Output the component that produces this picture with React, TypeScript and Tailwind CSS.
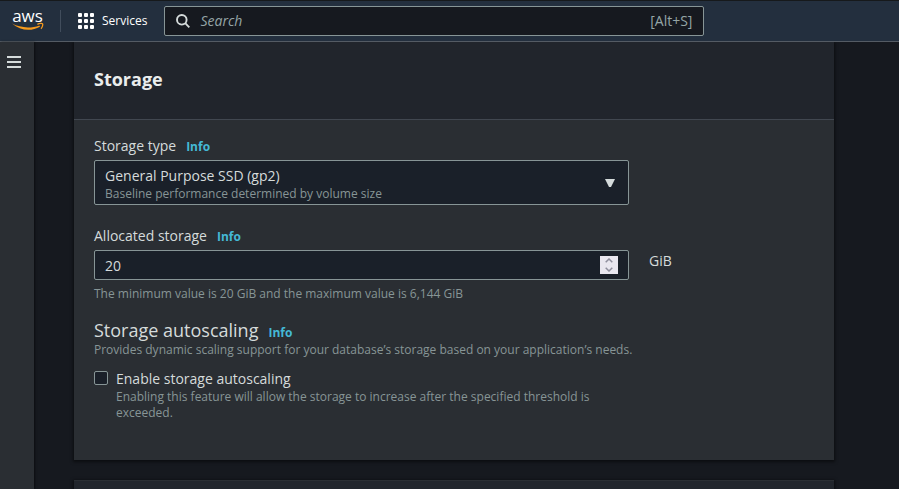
import { useState } from 'react';

function AwsLogo() {
  return (
    <svg viewBox="0 -6 32 34" className="block h-[34px] w-8" role="img" aria-label="AWS">
      <text x="15.5" y="12" textAnchor="middle" fill="#ffffff" className="font-['Open_Sans',sans-serif] text-[17px] font-medium">
        aws
      </text>
      <path d="M0 13.6C8 18 19 18.6 27.4 15.4L28 16.7C19.5 21.6 8.5 21 0 13.6Z" fill="#f79a1c" />
      <path d="M25.4 14.3C27.4 13.3 30.2 13.2 30.6 13.9C31.1 14.7 30.3 17.4 29 18.7" fill="none" stroke="#f79a1c" strokeWidth="1.3" />
    </svg>
  );
}

function ServicesIcon() {
  const offsets = [0, 6, 12];
  return (
    <svg viewBox="0 0 16 16" className="size-4" aria-hidden="true" fill="#ffffff">
      {offsets.map((y) => offsets.map((x) => <rect key={`${x}-${y}`} x={x} y={y} width="4" height="4" rx="1" />))}
    </svg>
  );
}

function InfoLink() {
  return (
    <a href="#info" className="ml-2.5 text-[12px] font-bold text-[#44b9d6]">
      Info
    </a>
  );
}

function TopBar() {
  return (
    <header className="flex h-[42px] items-center border-t border-b border-t-[#16191b] border-b-[#545b64] bg-[#232f3e] pl-3">
      <a href="#home" className="shrink-0">
        <AwsLogo />
      </a>
      <div className="ml-4 h-[22px] w-px bg-[#414d5c]" />
      <button type="button" className="ml-[17px] flex items-center gap-2 text-[12px] text-white">
        <ServicesIcon />
        Services
      </button>
      <label className="ml-[17px] flex h-[30px] w-[540px] items-center rounded-xs border border-[#879596] bg-[#16191f] px-[11px]">
        <svg viewBox="0 0 14 14" className="size-3.5 shrink-0" fill="none" stroke="#d5dbdb" strokeWidth="1.9" aria-hidden="true">
          <circle cx="5.8" cy="5.8" r="4.8" />
          <path d="M9.2 9.2L13.3 13.3" />
        </svg>
        <input
          type="search"
          aria-label="Search"
          placeholder="Search"
          className="ml-2.5 min-w-0 flex-1 bg-transparent text-[14px] italic outline-none placeholder:text-[#95a5a6]"
        />
        <span className="text-[14px] text-[#95a5a6]">[Alt+S]</span>
      </label>
    </header>
  );
}

function StorageTypeField() {
  return (
    <div className="col-span-3">
      <div className="flex h-5 items-baseline leading-[22px]">
        <label htmlFor="storage-type">Storage type</label>
        <InfoLink />
      </div>
      <div className="mt-[5px] grid">
        <select
          id="storage-type"
          aria-describedby="storage-type-note"
          className="col-start-1 row-start-1 h-[45px] appearance-none rounded-xs border border-[#879596] bg-[#1a2029] px-2.5 pt-1 pb-[18px] text-[14px] leading-5"
        >
          <option>General Purpose SSD (gp2)</option>
        </select>
        <span id="storage-type-note" className="pointer-events-none col-start-1 row-start-1 mb-[3px] ml-[11px] self-end text-[12px] leading-4 text-[#879596]">
          Baseline performance determined by volume size
        </span>
        <svg viewBox="0 0 10 8" className="pointer-events-none col-start-1 row-start-1 mr-3.5 h-2 w-2.5 self-center justify-self-end" fill="#d5dbdb" aria-hidden="true">
          <path d="M0 0H10L6 8H4Z" />
        </svg>
      </div>
    </div>
  );
}

function AllocatedStorageField() {
  const [size, setSize] = useState(20);
  return (
    <>
      <div className="col-span-3">
        <div className="flex h-5 items-baseline leading-[22px]">
          <label htmlFor="allocated">Allocated storage</label>
          <InfoLink />
        </div>
        <div className="mt-[5px] grid">
          <input
            id="allocated"
            type="number"
            min={20}
            max={6144}
            value={size}
            onChange={(e) => setSize(Number(e.target.value))}
            className="col-start-1 row-start-1 h-[30px] rounded-xs border border-[#879596] bg-[#1a2029] px-2.5 text-[14px] [appearance:textfield]"
          />
          <div className="col-start-1 row-start-1 mr-[11px] flex h-[18px] w-[18px] flex-col self-center justify-self-end bg-[#e9e7ef] text-[#8f8f9d]">
            <button type="button" aria-label="Increase" onClick={() => setSize(size + 1)} className="flex flex-1 items-center justify-center">
              <svg viewBox="0 0 8 5" className="h-[5px] w-2" fill="none" stroke="currentColor" strokeWidth="1.5">
                <path d="M0.7 4.2L4 1L7.3 4.2" />
              </svg>
            </button>
            <button type="button" aria-label="Decrease" onClick={() => setSize(size - 1)} className="flex flex-1 items-center justify-center">
              <svg viewBox="0 0 8 5" className="h-[5px] w-2" fill="none" stroke="currentColor" strokeWidth="1.5">
                <path d="M0.7 0.8L4 4L7.3 0.8" />
              </svg>
            </button>
          </div>
        </div>
        <p className="mt-1.5 text-[12px] leading-4 text-[#879596]">The minimum value is 20 GiB and the maximum value is 6,144 GiB</p>
      </div>
      <span className="pt-[25px] leading-[22px]">GiB</span>
    </>
  );
}

function StorageCard() {
  return (
    <section className="shrink-0 bg-[#2a2e33] shadow-[0_1px_3px_1px_rgba(0,0,0,0.5)]">
      <div className="h-[78px] border-b border-[#414750] bg-[#21252c] px-5 pt-[25px]">
        <h2 className="text-[18px] leading-6 font-bold text-[#eaeded]">Storage</h2>
      </div>
      <div className="px-5 pt-[15px] pb-[39px]">
        <div className="grid grid-cols-4 gap-x-5">
          <StorageTypeField />
        </div>
        <div className="mt-5 grid grid-cols-4 gap-x-5">
          <AllocatedStorageField />
        </div>
        <div className="mt-4 flex h-6 items-baseline leading-6">
          <h3 className="text-[18px]">Storage autoscaling</h3>
          <InfoLink />
        </div>
        <p className="text-[12px] leading-4 text-[#879596]">Provides dynamic scaling support for your database’s storage based on your application’s needs.</p>
        <div className="mt-2.5 grid grid-cols-4 gap-x-5">
          <div className="col-span-3 flex gap-2">
            <input
              id="autoscaling"
              type="checkbox"
              aria-describedby="autoscaling-note"
              className="mt-[3px] size-3.5 shrink-0 appearance-none rounded-xs border border-[#879596] bg-[#1a2029] checked:bg-[#44b9d6]"
            />
            <div>
              <label htmlFor="autoscaling" className="block leading-[21px]">
                Enable storage autoscaling
              </label>
              <p id="autoscaling-note" className="text-[12px] leading-4 text-[#879596]">
                Enabling this feature will allow the storage to increase after the specified threshold is exceeded.
              </p>
            </div>
          </div>
        </div>
      </div>
    </section>
  );
}

export default function App() {
  return (
    <div className="flex h-screen flex-col overflow-hidden bg-[#16191f] font-['Open_Sans',sans-serif] text-[14px] leading-5 text-[#d5dbdb]">
      <TopBar />
      <div className="flex min-h-0 flex-1">
        <nav className="w-[34px] shrink-0 bg-[#2a2e33] pt-3.5 pl-[7px] shadow-[1px_0_2px_rgba(0,0,0,0.5)]">
          <button type="button" aria-label="Open navigation" className="flex w-3.5 flex-col gap-[3px]">
            <span className="h-0.5 w-full bg-[#d5dbdb]" />
            <span className="h-0.5 w-full bg-[#d5dbdb]" />
            <span className="h-0.5 w-full bg-[#d5dbdb]" />
          </button>
        </nav>
        <main className="flex min-w-0 flex-1 flex-col gap-5 overflow-hidden pr-[65px] pl-10">
          <StorageCard />
          <section className="h-20 shrink-0 border-t border-[#2a2e33] bg-[#21252c] shadow-[0_1px_3px_1px_rgba(0,0,0,0.5)]" />
        </main>
      </div>
    </div>
  );
}
